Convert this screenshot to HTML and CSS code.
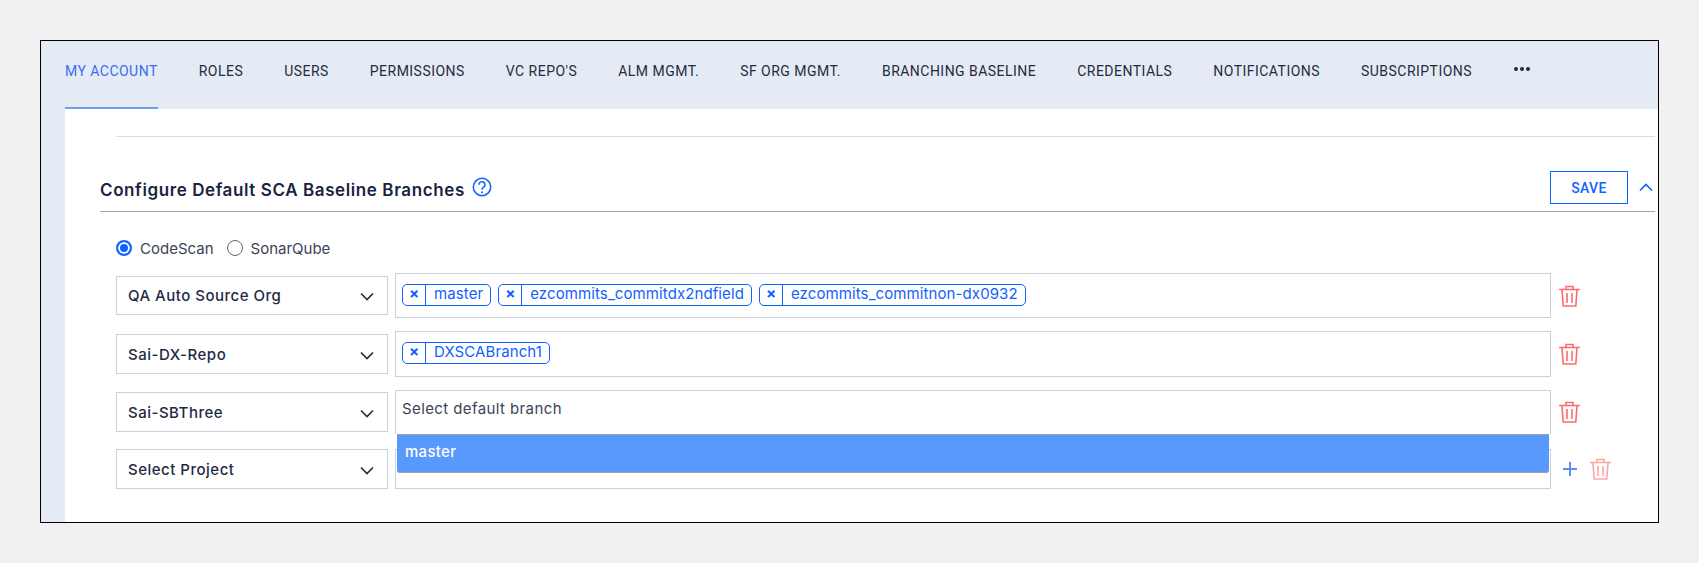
FILE: index.html
```html
<!DOCTYPE html>
<html lang="en">
<head>
    <meta charset="UTF-8">
    <title>Settings</title>
    <link rel="stylesheet" href="styles.css">
</head>
<body>
    <svg class="defs" width="0" height="0">
        <symbol id="trash" viewBox="0 0 21 22">
            <path d="M0 4.500h21M7 4V1.500h7V4M3 5l1.200 16h12.600L18 5M8 8v10M13 8v10" fill="none" stroke="currentColor" stroke-width="1.600"/>
        </symbol>
        <symbol id="chev" viewBox="0 0 14 9">
            <path d="M1 1.500l6 6 6-6" fill="none" stroke="currentColor" stroke-width="1.600"/>
        </symbol>
    </svg>
    <div class="frame">
        <nav class="tabs">
            <a class="tab active">MY ACCOUNT</a>
            <a class="tab">ROLES</a>
            <a class="tab">USERS</a>
            <a class="tab">PERMISSIONS</a>
            <a class="tab">VC REPO'S</a>
            <a class="tab">ALM MGMT.</a>
            <a class="tab">SF ORG MGMT.</a>
            <a class="tab">BRANCHING BASELINE</a>
            <a class="tab">CREDENTIALS</a>
            <a class="tab">NOTIFICATIONS</a>
            <a class="tab">SUBSCRIPTIONS</a>
            <a class="tab more"><i></i><i></i><i></i></a>
        </nav>
        <main class="content">
            <hr class="top-rule">
            <section class="section">
                <div class="section-head">
                    <h2>Configure Default SCA Baseline Branches</h2>
                    <svg class="help" width="20" height="20" viewBox="0 0 20 20">
                        <circle cx="10" cy="10" r="8.700" fill="none" stroke="currentColor" stroke-width="1.500"/>
                        <path d="M7 7.800a3 3 0 1 1 4.700 2.400c-1.200.8-1.700 1.300-1.700 2.600" fill="none" stroke="currentColor" stroke-width="1.600"/>
                        <circle cx="10" cy="15.200" r="1" fill="currentColor"/>
                    </svg>
                    <button class="save">SAVE</button>
                    <svg class="collapse" width="14" height="9"><use href="#chev"/></svg>
                </div>
                <div class="radios">
                    <label class="radio on"><span class="dot"></span>CodeScan</label>
                    <label class="radio"><span class="dot"></span>SonarQube</label>
                </div>
                <div class="row row-a">
                    <div class="select">QA Auto Source Org<svg width="14" height="9"><use href="#chev"/></svg></div>
                    <div class="multi">
                        <span class="chip"><b>×</b><span>master</span></span>
                        <span class="chip"><b>×</b><span>ezcommits_commitdx2ndfield</span></span>
                        <span class="chip"><b>×</b><span>ezcommits_commitnon-dx0932</span></span>
                    </div>
                    <svg class="trash" width="21" height="22"><use href="#trash"/></svg>
                </div>
                <div class="row row-b">
                    <div class="select">Sai-DX-Repo<svg width="14" height="9"><use href="#chev"/></svg></div>
                    <div class="multi">
                        <span class="chip"><b>×</b><span>DXSCABranch1</span></span>
                    </div>
                    <svg class="trash" width="21" height="22"><use href="#trash"/></svg>
                </div>
                <div class="row row-c">
                    <div class="select">Sai-SBThree<svg width="14" height="9"><use href="#chev"/></svg></div>
                    <div class="multi open">
                        <span class="placeholder">Select default branch</span>
                        <div class="menu">master</div>
                    </div>
                    <svg class="trash" width="21" height="22"><use href="#trash"/></svg>
                </div>
                <div class="row row-d">
                    <div class="select">Select Project<svg width="14" height="9"><use href="#chev"/></svg></div>
                    <div class="multi"></div>
                    <svg class="plus" width="14" height="14" viewBox="0 0 14 14"><path d="M7 0v14M0 7h14" stroke="currentColor" stroke-width="2"/></svg>
                    <svg class="trash faded" width="21" height="22"><use href="#trash"/></svg>
                </div>
            </section>
        </main>
    </div>
</body>
</html>
```

FILE: styles.css
```css
* {
    box-sizing: border-box;
}
body {
    margin: 0;
    background-color: #f1f1f1;
    font-family: "Inter", sans-serif;
    color: #1f2a44;
}
.defs {
    position: absolute;
}
.frame {
    width: 1619px;
    height: 483px;
    margin: 40px 0 0 40px;
    border: 1px solid #000;
    background-color: #e5ebf4;
    display: flex;
    flex-direction: column;
}
.tabs {
    height: 68px;
    padding-left: 24px;
    display: flex;
    gap: 41px;
}
.tab {
    height: 68px;
    line-height: 60px;
    font-family: "Roboto", sans-serif;
    font-size: 14px;
    letter-spacing: 0.47px;
    white-space: nowrap;
    color: #252b3f;
}
.tab.active {
    color: #3a6df0;
    border-bottom: 2px solid #6f9df0;
}
.more {
    display: flex;
    align-items: center;
    gap: 2px;
    height: 56px;
    margin-left: 1px;
}
.more i {
    width: 4px;
    height: 4px;
    border-radius: 50%;
    background-color: #1f2a44;
}
.content {
    flex: 1;
    margin-left: 24px;
    background-color: #fff;
    padding: 27px 3px 0 35px;
}
.top-rule {
    margin: 0 0 0 16px;
    border: 0;
    border-top: 1px solid #dddddd;
}
.section-head {
    height: 75px;
    padding-top: 34px;
    border-bottom: 1px solid #a8a8a8;
    display: flex;
    align-items: flex-start;
}
.section-head h2 {
    margin: 0;
    padding-top: 7px;
    font-size: 17px;
    font-weight: 600;
    letter-spacing: 0.6px;
    line-height: 24px;
    color: #1a2440;
}
.help {
    margin: 6px 0 0 7px;
    color: #0f62fe;
}
.save {
    margin-left: auto;
    width: 78px;
    height: 33px;
    border: 1px solid #0f62fe;
    background: #fff;
    color: #0f62fe;
    font-family: "Roboto", sans-serif;
    font-size: 14px;
    font-weight: 500;
    letter-spacing: 0.4px;
}
.collapse {
    margin: 12px 2px 0 11px;
    color: #0f62fe;
    transform: rotate(180deg);
}
.radios {
    margin: 0 0 0 16px;
    height: 61px;
    padding: 24px 0 0;
    display: flex;
    align-items: flex-start;
    gap: 13px;
}
.radio {
    height: 24px;
    display: flex;
    align-items: center;
    gap: 8px;
    font-size: 15px;
    color: #3b4358;
}
.dot {
    width: 16px;
    height: 16px;
    border: 1px solid #666;
    border-radius: 50%;
}
.radio.on .dot {
    border: 2px solid #0f62fe;
    background-color: #0f62fe;
    box-shadow: inset 0 0 0 2px #fff;
}
.row {
    position: relative;
    margin-left: 16px;
    display: flex;
    align-items: center;
}
.row-a { height: 45px; }
.row-b { height: 46px; margin-top: 13px; }
.row-c { height: 44px; margin-top: 13px; }
.row-d { height: 40px; margin-top: 15px; }
.select {
    width: 272px;
    height: 40px;
    padding: 0 12px 0 11px;
    border: 1px solid #cdd0d8;
    display: flex;
    align-items: center;
    justify-content: space-between;
    font-size: 15px;
    font-weight: 500;
    letter-spacing: 0.5px;
}
.select svg {
    margin-right: 1px;
    margin-top: 2px;
}
.row-a .select {
    height: 39px;
}
.multi {
    position: relative;
    width: 1156px;
    height: 100%;
    margin: 0 8px 0 7px;
    padding: 10px 6px 0;
    border: 1px solid #cdd0d8;
    display: flex;
    align-items: flex-start;
    gap: 7px;
}
.multi.open {
    border-bottom: 0;
}
.chip {
    height: 22px;
    border: 1px solid #0f62fe;
    border-radius: 5px;
    display: flex;
    color: #0f62fe;
    font-size: 15px;
    letter-spacing: 0.1px;
    line-height: 18px;
}
.chip b {
    width: 23px;
    border-right: 1px solid #0f62fe;
    text-align: center;
    font-size: 15px;
    line-height: 17px;
    font-weight: 700;
    letter-spacing: 0;
}
.chip span {
    padding: 0 7px 0 8px;
}
.placeholder {
    font-size: 15px;
    letter-spacing: 0.4px;
    line-height: 18px;
    color: #3b4358;
    margin-top: -1px;
}
.menu {
    position: absolute;
    z-index: 2;
    left: 1px;
    right: 1px;
    top: 43px;
    height: 39px;
    padding-left: 8px;
    background-color: #5899fd;
    border-top: 1px solid #a0a0a0;
    border-bottom: 1px solid #a0a0a0;
    border-radius: 0 0 3px 3px;
    color: #fff;
    font-size: 15px;
    font-weight: 500;
    letter-spacing: 0.3px;
    line-height: 34px;
}
.trash {
    color: #ff6b6b;
}
.plus {
    color: #5c90f0;
    margin-left: 4px;
}
.trash.faded {
    margin-left: 13px;
    opacity: 0.6;
}
```
